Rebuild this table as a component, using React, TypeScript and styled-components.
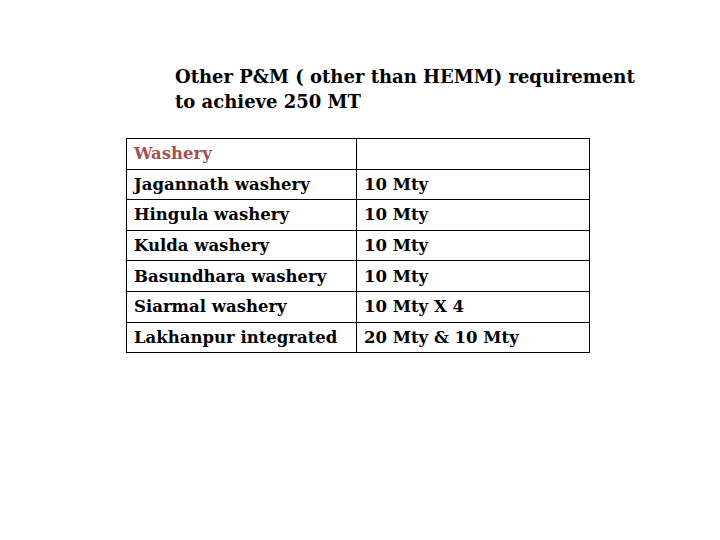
import React from "react";
import styled, { createGlobalStyle } from "styled-components";

const GlobalStyle = createGlobalStyle`
  html, body {
    margin: 0;
    padding: 0;
    background: #ffffff;
  }
  body {
    width: 720px;
    height: 540px;
    overflow: hidden;
    font-family: "DejaVu Serif", "Liberation Serif", serif;
  }
`;

const Slide = styled.div`
  width: 720px;
  height: 540px;
  padding: 64px 0 0 126px;
  box-sizing: border-box;
`;

const Title = styled.h1`
  margin: 0 0 24px 49px;
  font-size: 18px;
  font-weight: 700;
  line-height: 25px;
  color: #000;
`;

const Table = styled.table`
  border-collapse: collapse;
  width: 464px;
  table-layout: fixed;
`;

const Row = styled.tr`
  height: 30.6px;
`;

const Cell = styled.td<{ $head?: boolean; $wide?: boolean }>`
  border: 1px solid #000;
  padding: 0 4px 0 7px;
  width: ${(p) => (p.$wide ? "218px" : "auto")};
  font-size: 16.5px;
  font-weight: 700;
  color: ${(p) => (p.$head ? "#a4504e" : "#000")};
  white-space: nowrap;
  overflow: hidden;
  vertical-align: middle;
`;

const rows: [string, string][] = [
  ["Jagannath washery", "10 Mty"],
  ["Hingula washery", "10 Mty"],
  ["Kulda washery", "10 Mty"],
  ["Basundhara washery", "10 Mty"],
  ["Siarmal washery", "10 Mty X 4"],
  ["Lakhanpur integrated", "20 Mty & 10 Mty"],
];

export default function App() {
  return (
    <>
      <GlobalStyle />
      <Slide>
        <Title>
          Other P&amp;M ( other than HEMM) requirement
          <br />
          to achieve 250 MT
        </Title>
        <Table>
          <tbody>
            <Row>
              <Cell $head $wide>Washery</Cell>
              <Cell></Cell>
            </Row>
            {rows.map((r, i) => (
              <Row key={i}>
                <Cell $wide>{r[0]}</Cell>
                <Cell>{r[1]}</Cell>
              </Row>
            ))}
          </tbody>
        </Table>
      </Slide>
    </>
  );
}
